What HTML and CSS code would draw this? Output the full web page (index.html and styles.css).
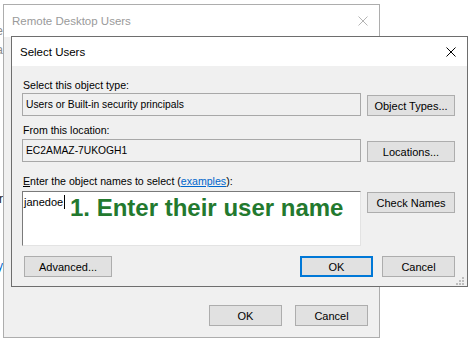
FILE: index.html
```html
<!DOCTYPE html>
<html lang="en">
<head>
  <meta charset="UTF-8">
  <title>Select Users</title>
  <link rel="stylesheet" href="styles.css">
</head>
<body>
  <div class="desktop">
    <span class="peek peek-1">Name</span>
    <span class="peek peek-2">Data</span>
    <span class="peek peek-3">Member</span>
    <span class="peek peek-4 link">Directory</span>

    <div class="window bg-window">
      <div class="titlebar">
        <span class="title">Remote Desktop Users</span>
        <svg class="close" width="10" height="10" viewBox="0 0 10 10"><path d="M0.5 0.5L9.5 9.5M9.5 0.5L0.5 9.5" stroke="#b4b4b4" stroke-width="1"/></svg>
      </div>
      <div class="window-body">
        <div class="bg-actions">
          <button class="btn btn-sm">OK</button>
          <button class="btn btn-sm">Cancel</button>
        </div>
      </div>
    </div>

    <div class="window dialog">
      <div class="titlebar">
        <span class="title">Select Users</span>
        <svg class="close" width="10" height="10" viewBox="0 0 10 10"><path d="M0.5 0.5L9.5 9.5M9.5 0.5L0.5 9.5" stroke="#000" stroke-width="1"/></svg>
      </div>
      <div class="dialog-body">
        <div class="label label-1">Select this object type:</div>
        <div class="row">
          <div class="field">Users or Built-in security principals</div>
          <button class="btn btn-side">Object Types...</button>
        </div>

        <div class="label label-2">From this location:</div>
        <div class="row">
          <div class="field">EC2AMAZ-7UKOGH1</div>
          <button class="btn btn-side">Locations...</button>
        </div>

        <div class="label label-3"><u>E</u>nter the object names to select (<a class="link" href="#">examples</a>):</div>
        <div class="row row-top">
          <div class="names">
            <span class="typed">janedoe</span><span class="caret"></span>
            <span class="callout">1. Enter their user name</span>
          </div>
          <button class="btn btn-side">Check Names</button>
        </div>

        <div class="dialog-actions">
          <button class="btn btn-adv">Advanced...</button>
          <div class="spacer"></div>
          <button class="btn btn-sm btn-focus">OK</button>
          <button class="btn btn-sm">Cancel</button>
        </div>
      </div>
      <svg class="grip" width="8" height="8" viewBox="0 0 8 8">
        <rect x="6" y="0" width="2" height="2" fill="#bdbdbd"/>
        <rect x="3" y="3" width="2" height="2" fill="#bdbdbd"/>
        <rect x="6" y="3" width="2" height="2" fill="#bdbdbd"/>
        <rect x="0" y="6" width="2" height="2" fill="#bdbdbd"/>
        <rect x="3" y="6" width="2" height="2" fill="#bdbdbd"/>
        <rect x="6" y="6" width="2" height="2" fill="#bdbdbd"/>
      </svg>
    </div>
  </div>
</body>
</html>
```

FILE: styles.css
```css
* { box-sizing: border-box; }
body { margin: 0; font-family: "Liberation Sans", Arial, sans-serif; font-size: 11px; color: #000; background: #fff; }
.desktop { position: relative; width: 476px; height: 348px; overflow: hidden; }

/* bits of the window further behind */
.peek { position: absolute; right: 473px; font-size: 12px; line-height: 14px; white-space: nowrap; }
.peek-1 { top: 24px; color: #8c8c8c; }
.peek-2 { top: 43px; color: #8c8c8c; }
.peek-3 { top: 192px; color: #222; }
.peek-4 { top: 259px; }

.window { position: absolute; display: flex; flex-direction: column; background: #f0f0f0; }
.titlebar { display: flex; align-items: center; justify-content: space-between; background: #fff; flex: none; }
.close { display: block; }

.bg-window { left: 3px; top: 4px; width: 377px; height: 334px; border: 1px solid #adadad; }
.bg-window .titlebar { height: 32px; padding: 0 11px 0 8px; color: #9a9a9a; font-size: 11.5px; }
.window-body { flex: 1; display: flex; flex-direction: column; justify-content: flex-end; }
.bg-actions { display: flex; justify-content: flex-end; gap: 13px; padding: 0 11px 11px 0; }

.dialog { left: 11px; top: 36px; width: 457px; height: 251px; border: 1px solid #6e6e6e; }
.dialog .titlebar { height: 29px; padding: 0 11px 0 8px; font-size: 11.5px; }
.dialog-body { flex: 1; display: flex; flex-direction: column; padding: 13px 12px 9px 10px; }

.label { font-size: 10.6px; line-height: 13px; padding-left: 1px; }
.label-1 { margin-bottom: 1px; }
.label-2 { margin-top: 8px; margin-bottom: 2px; }
.label-3 { margin-top: 13px; margin-bottom: 3px; }
.label u { text-decoration: underline; }
.link { color: #0066cc; text-decoration: underline; }
.peek.link { text-decoration: none; }

.row { display: flex; gap: 6px; align-items: flex-start; }
.field { width: 339px; height: 23px; line-height: 21px; padding-left: 3px; font-size: 10.3px; border: 1px solid #a8a8a8; background: #f0f0f0; white-space: nowrap; }
.names { position: relative; width: 339px; height: 55px; padding: 3px 0 0 1px; background: #fff; border: 1px solid #e3e3e3; border-top-color: #7a7a7a; border-left-color: #7a7a7a; line-height: 13px; }
.caret { display: inline-block; width: 1px; height: 14px; background: #000; vertical-align: -3px; margin-left: 1px; }
.callout { position: absolute; left: 47px; top: 4px; font-size: 24px; line-height: 24px; font-weight: bold; color: #23792e; white-space: nowrap; }

.btn { font-family: inherit; font-size: 11px; color: #000; background: #e1e1e1; border: 1px solid #adadad; height: 21px; padding: 0; margin: 0; }
.btn-side { width: 88px; margin-top: 2px; }
.row-top .btn-side { margin-top: 1px; }
.btn-sm { width: 73px; }
.btn-adv { width: 88px; margin-left: 2px; }
.btn-focus { border: 2px solid #0078d7; }

.dialog-actions { margin-top: auto; display: flex; gap: 9px; }
.spacer { flex: 1; }

.grip { position: absolute; right: 3px; bottom: 1px; }
```
